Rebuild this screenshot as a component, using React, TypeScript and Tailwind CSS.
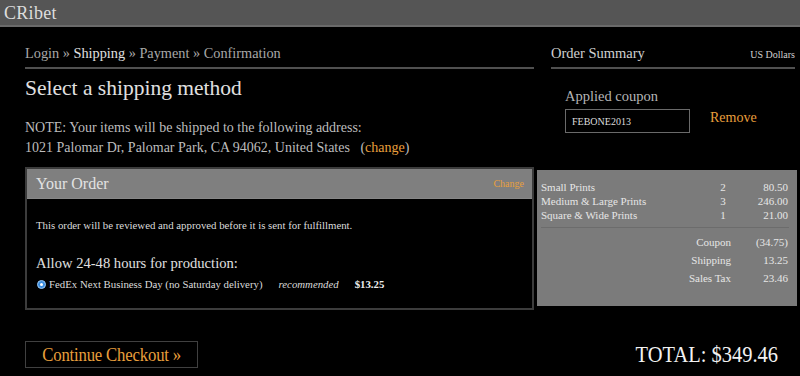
import React from "react";

const orange = "text-[#e89f3c]";

export default function App() {
  return (
    <div className="w-[800px] h-[376px] overflow-hidden bg-black font-[family-name:'Liberation_Serif',serif] text-[#ccc]">
      {/* header */}
      <div className="h-[27px] bg-[#555555] border-b-2 border-[#6a6a6a] px-[4px] flex items-center">
        <span className="text-[18px] leading-none text-[#ddd] tracking-[0.3px]">CRibet</span>
      </div>

      <div className="flex items-start pl-[25px]">
        {/* left column */}
        <div className="w-[509px] flex flex-col">
          <div className="pt-[16px] pb-[4px] border-b-2 border-[#505050] text-[14.3px] leading-[20px] text-[#a8a8a8]">
            Login » <span className="text-[#e0e0e0]">Shipping</span> » Payment » Confirmation
          </div>
          <div className="mt-[5px] text-[21.5px] leading-[28px] text-[#e0e0e0]">Select a shipping method</div>
          <div className="mt-[16px] text-[14px] leading-[20px] text-[#bdbdbd]">
            <div>NOTE: Your items will be shipped to the following address:</div>
            <div>
              1021 Palomar Dr, Palomar Park, CA 94062, United States{"\u00a0\u00a0\u00a0"}(
              <span className={orange}>change</span>)
            </div>
          </div>
          {/* Your order box */}
          <div className="mt-[9px] h-[143px] border-2 border-[#3c3c3c] flex flex-col">
            <div className="h-[30px] bg-[#7f7f7f] border-b border-[#888] flex items-center justify-between pl-[9px] pr-[8px]">
              <span className="text-[16px] text-[#e2e2e2]">Your Order</span>
              <span className={`text-[10px] ${orange}`}>Change</span>
            </div>
            <div className="pl-[9px] pt-[19px] text-[10.8px] leading-[14px] text-[#dcdcdc]">
              This order will be reviewed and approved before it is sent for fulfillment.
            </div>
            <div className="pl-[9px] mt-[21px] text-[14.6px] leading-[20px] text-[#e0e0e0]">
              Allow 24-48 hours for production:
            </div>
            <div className="pl-[9px] mt-[3px] flex items-center text-[10.8px] leading-[16px] text-[#dcdcdc]">
              <span className="w-[9px] h-[9px] rounded-full bg-[#3b8de0] border border-[#9cc8f2] flex items-center justify-center ml-[1px] mr-[3px]">
                <span className="w-[3px] h-[3px] rounded-full bg-white" />
              </span>
              <span>FedEx Next Business Day (no Saturday delivery)</span>
              <span className="italic ml-[16px]">recommended</span>
              <span className="font-bold ml-[16px] text-[#eee]">$13.25</span>
            </div>
          </div>
        </div>

        {/* right column */}
        <div className="ml-[3px] w-[260px] flex flex-col">
          <div className="ml-[14px] mr-[2px] pt-[16px] pb-[4px] border-b-2 border-[#505050] flex items-end justify-between">
            <span className="text-[14.5px] leading-[20px] text-[#d0d0d0]">Order Summary</span>
            <span className="text-[10px] leading-[16px] text-[#d0d0d0]">US Dollars</span>
          </div>
          <div className="ml-[28px] mt-[17px] text-[14.5px] leading-[20px] text-[#b5b5b5]">Applied coupon</div>
          <div className="ml-[28px] mt-[3px] flex items-center">
            <div className="w-[125px] h-[24px] border border-[#6a6a6a] flex items-center pl-[6px] text-[10px] text-[#ddd]">
              FEBONE2013
            </div>
            <span className={`ml-[20px] text-[14px] ${orange} -mt-[8px]`}>Remove</span>
          </div>
          {/* gray summary */}
          <div className="mt-[37px] h-[136px] bg-[#7b7b7b] px-[4px] pt-[10px] text-[11px] text-[#e6e6e6]">
            <div className="flex flex-col">
              {[
                ["Small Prints", "2", "80.50"],
                ["Medium & Large Prints", "3", "246.00"],
                ["Square & Wide Prints", "1", "21.00"],
              ].map(([n, q, a]) => (
                <div key={n} className="flex leading-[14px] h-[14px]">
                  <span className="flex-1">{n}</span>
                  <span className="w-[10px] text-center">{q}</span>
                  <span className="w-[65px] text-right pr-[5px]">{a}</span>
                </div>
              ))}
            </div>
            <div className="mt-[5px] mr-[4px] border-t border-[#6c6c6c]" />
            <div className="mt-[5px] flex flex-col">
              {[
                ["Coupon", "(34.75)"],
                ["Shipping", "13.25"],
                ["Sales Tax", "23.46"],
              ].map(([l, v]) => (
                <div key={l} className="flex justify-end h-[18px] leading-[18px]">
                  <span className="text-right">{l}</span>
                  <span className="w-[62px] text-right pr-[5px]">{v}</span>
                </div>
              ))}
            </div>
          </div>
        </div>
      </div>

      {/* bottom */}
      <div className="flex items-center justify-between pl-[25px] pr-[22px] mt-[31px]">
        <div className={`h-[27px] w-[173px] border border-[#404040] flex items-center justify-center text-[18px] ${orange}`}>
          <span className="inline-block scale-x-[0.93] tracking-[-0.2px] leading-none">Continue Checkout »</span>
        </div>
        <span className="inline-block origin-right scale-x-[0.89] text-[23px] leading-none text-[#f2f2f2] -mt-[1px]">
          TOTAL: $349.46
        </span>
      </div>
    </div>
  );
}
